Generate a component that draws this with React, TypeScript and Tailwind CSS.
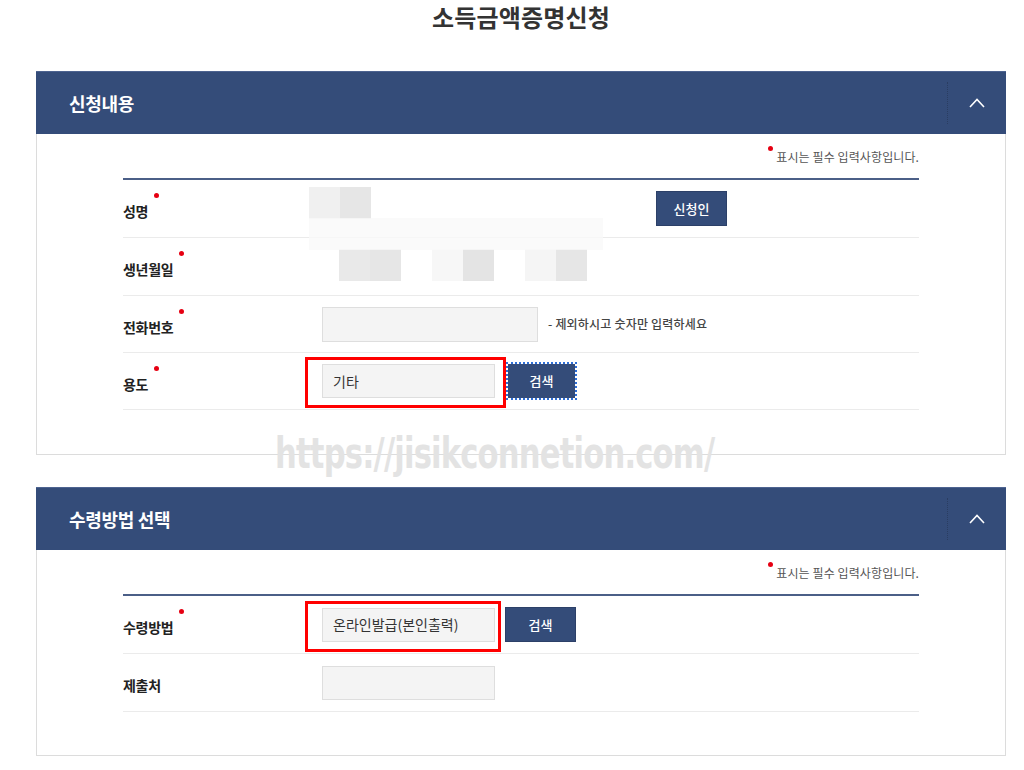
import React from "react";

const KR = { fontFamily: '"Noto Sans CJK KR", "Noto Sans", sans-serif' };

function Dot({ className = "" }: { className?: string }) {
  return <span className={"absolute w-[5px] h-[5px] rounded-full bg-[#e60012] " + className} />;
}

function Label({ children }: { children: React.ReactNode }) {
  return (
    <div className="w-[199px] shrink-0 pt-[3px]">
      <span className="relative text-[14px] leading-[20px] font-bold text-[#222] tracking-[-0.3px]">
        {children}
        <Dot className="left-full ml-[6px] -top-[8px]" />
      </span>
    </div>
  );
}

function PlainLabel({ children }: { children: React.ReactNode }) {
  return (
    <div className="w-[199px] shrink-0 pt-[3px]">
      <span className="text-[14px] leading-[20px] font-bold text-[#222] tracking-[-0.3px]">{children}</span>
    </div>
  );
}

function Header({ title }: { title: string }) {
  return (
    <div className="h-[63px] bg-[#344c79] border-t border-[#4d6390] flex items-center justify-between">
      <h2 className="pl-[33px] text-[18px] font-bold text-white tracking-[-0.3px]">{title}</h2>
      <div className="h-[42px] w-[59px] border-l border-dotted border-[#2a3d62] flex items-center justify-center">
        <svg width="16" height="10" viewBox="0 0 16 10" fill="none">
          <polyline points="1,9 8,1.5 15,9" stroke="white" strokeWidth="1.6" />
        </svg>
      </div>
    </div>
  );
}

function Note() {
  return (
    <div className="flex justify-end">
      <span className="relative text-[12px] leading-[16px] text-[#555] tracking-[0.1px]">
        <Dot className="-left-[8px] -top-[3px]" />
        표시는 필수 입력사항입니다.
      </span>
    </div>
  );
}

function Input({ w, value, red }: { w: string; value?: string; red?: { r: string } }) {
  return (
    <div className={"relative " + w}>
      <div className="h-[34px] bg-[#f4f4f4] border border-[#dedede] flex items-center pl-[10px] text-[14px] text-[#333]">
        {value}
      </div>
      {red && (
        <div className={"absolute -left-[17px] -top-[7px] -bottom-[10px] border-[3px] border-[#ff0000] " + red.r} />
      )}
    </div>
  );
}

function Btn({ children, focus }: { children: React.ReactNode; focus?: boolean }) {
  return (
    <button
      className={
        "bg-[#344c79] text-white text-[13px] font-medium flex items-center justify-center " +
        (focus
          ? "w-[67px] h-[34px] outline-2 outline-dotted outline-[#2f6fd6]"
          : "w-[71px] h-[35px] border border-[#2c4068]")
      }
    >
      {children}
    </button>
  );
}

function Block({ a, b }: { a: string; b: string }) {
  return (
    <div className="flex w-[62px] h-[32px]">
      <div className={"flex-1 " + a} />
      <div className={"flex-1 " + b} />
    </div>
  );
}

export default function App() {
  return (
    <div className="bg-white min-h-[770px] w-[1024px]" style={KR}>
      <div className="relative ml-[36px] w-[970px]">
        <h1 className="h-[34px] leading-[34px] text-center text-[24px] font-bold text-[#333] tracking-[0.2px]">
          소득금액증명신청
        </h1>

        <section className="mt-[37px]">
          <Header title="신청내용" />
          <div className="border-x border-b border-[#dcdcdc] px-[86px] pt-[15px] pb-[44px]">
            <Note />
            <div className="mt-[13px] border-t-2 border-[#4b5f87]">
              <div className="flex items-center h-[58px] border-b border-[#ebebeb]">
                <Label>성명</Label>
                <div className="relative flex items-center h-full">
                  <div className="absolute -left-[13px] top-[7px]">
                    <Block a="bg-[#f0f0f0]" b="bg-[#e6e6e6]" />
                  </div>
                  <div className="absolute -left-[13px] top-[38px] w-[294px] h-[32px] bg-[#f9f9f9] opacity-80" />
                  <div className="ml-[334px]">
                    <Btn>신청인</Btn>
                  </div>
                </div>
              </div>
              <div className="flex items-center h-[58px] border-b border-[#ebebeb]">
                <Label>생년월일</Label>
                <div className="flex gap-[31px] ml-[17px] -mt-[3px]">
                  <Block a="bg-[#e9e9e9]" b="bg-[#e6e6e6]" />
                  <Block a="bg-[#f7f7f7]" b="bg-[#e4e4e4]" />
                  <Block a="bg-[#f5f5f5]" b="bg-[#e6e6e6]" />
                </div>
              </div>
              <div className="flex items-center h-[57px] border-b border-[#ebebeb]">
                <Label>전화번호</Label>
                <div className="flex items-center">
                  <div className="w-[216px] h-[35px] bg-[#f4f4f4] border border-[#dedede]" />
                  <span className="ml-[10px] text-[12px] font-medium text-[#444] tracking-[0.2px]">
                    - 제외하시고 숫자만 입력하세요
                  </span>
                </div>
              </div>
              <div className="flex items-center h-[57px] border-b border-[#ebebeb]">
                <Label>용도</Label>
                <div className="flex items-center">
                  <Input w="w-[173px]" value="기타" red={{ r: "-right-[11px]" }} />
                  <div className="ml-[13px]">
                    <Btn focus>검색</Btn>
                  </div>
                </div>
              </div>
            </div>
          </div>
        </section>

        <div
          className="absolute left-[239px] top-[429px] origin-left scale-x-[0.81] text-[42px] leading-[50px] font-black text-[#e3e3e3] tracking-[-1px] pointer-events-none whitespace-nowrap"
          style={{ fontFamily: '"Liberation Sans Narrow", "DejaVu Sans Condensed", "Liberation Sans", sans-serif' }}
        >
          https://jisikconnetion.com/
        </div>

        <section className="mt-[32px]">
          <Header title="수령방법 선택" />
          <div className="border-x border-b border-[#dcdcdc] px-[86px] pt-[15px] pb-[43px]">
            <Note />
            <div className="mt-[13px] border-t-2 border-[#4b5f87]">
              <div className="flex items-center h-[58px] border-b border-[#ebebeb]">
                <Label>수령방법</Label>
                <div className="flex items-center">
                  <Input w="w-[173px]" value="온라인발급(본인출력)" red={{ r: "-right-[6px]" }} />
                  <div className="ml-[10px]">
                    <Btn>검색</Btn>
                  </div>
                </div>
              </div>
              <div className="flex items-center h-[58px] border-b border-[#ebebeb]">
                <PlainLabel>제출처</PlainLabel>
                <div className="w-[173px] h-[34px] bg-[#f4f4f4] border border-[#dedede]" />
              </div>
            </div>
          </div>
        </section>
      </div>
    </div>
  );
}
